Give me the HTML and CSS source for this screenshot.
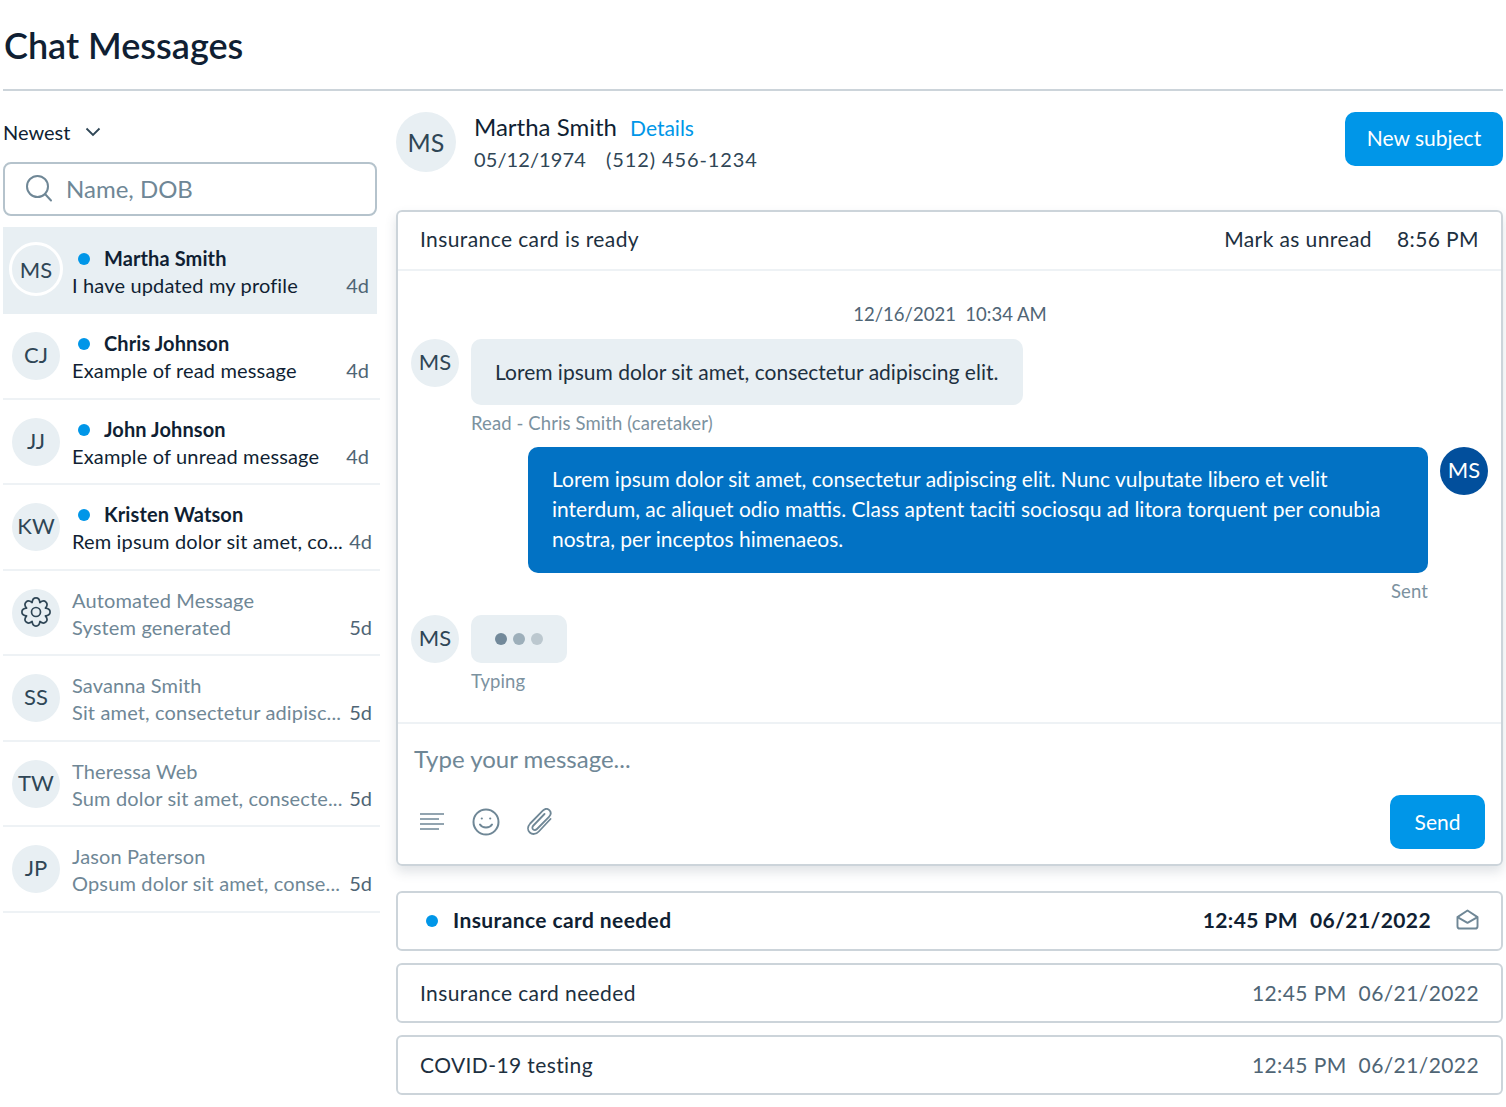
FILE: index.html
```html
<!DOCTYPE html>
<html lang="en">
<head>
    <meta charset="UTF-8">
    <title>Chat Messages</title>
    <link rel="stylesheet" href="styles.css">
</head>
<body>
    <div class="page">
        <header class="page-head">
            <h1>Chat Messages</h1>
        </header>
        <div class="columns">
            <aside class="sidebar">
                <div class="sort">
                    <span>Newest</span>
                    <svg width="16" height="10" viewBox="0 0 16 10" fill="none" stroke="#2f4656" stroke-width="1.8"><path d="M1.5 1.5 8 8l6.5-6.5"/></svg>
                </div>
                <div class="search">
                    <svg width="28" height="28" viewBox="0 0 28 28" fill="none" stroke="#6f8796" stroke-width="2"><circle cx="12.5" cy="12.5" r="10.5"/><path d="m20 20 6 6.5" stroke-linecap="round"/></svg>
                    <span>Name, DOB</span>
                </div>
                <ul class="threads">
                    <li class="thread selected">
                        <div class="avatar ringed">MS</div>
                        <div class="thread-text">
                            <div class="thread-name unread"><i class="dot"></i>Martha Smith</div>
                            <div class="thread-last"><span class="snippet">I have updated my profile</span><span class="age">4d</span></div>
                        </div>
                    </li>
                    <li class="thread">
                        <div class="avatar">CJ</div>
                        <div class="thread-text">
                            <div class="thread-name unread"><i class="dot"></i>Chris Johnson</div>
                            <div class="thread-last"><span class="snippet">Example of read message</span><span class="age">4d</span></div>
                        </div>
                    </li>
                    <li class="thread">
                        <div class="avatar">JJ</div>
                        <div class="thread-text">
                            <div class="thread-name unread"><i class="dot"></i>John Johnson</div>
                            <div class="thread-last"><span class="snippet">Example of unread message</span><span class="age">4d</span></div>
                        </div>
                    </li>
                    <li class="thread">
                        <div class="avatar">KW</div>
                        <div class="thread-text">
                            <div class="thread-name unread"><i class="dot"></i>Kristen Watson</div>
                            <div class="thread-last"><span class="snippet">Rem ipsum dolor sit amet, co...</span><span class="age far">4d</span></div>
                        </div>
                    </li>
                    <li class="thread read">
                        <div class="avatar icon-avatar">
                            <svg width="30" height="30" viewBox="0 0 30 30" fill="none" stroke="#2f4656" stroke-width="1.7" stroke-linejoin="round"><circle cx="15" cy="15" r="4.500"/><path d="M11.10 5.580C11.670-.65 18.330-.65 18.900 5.580C23.710 1.580 28.420 6.290 24.420 11.100C30.650 11.670 30.650 18.330 24.420 18.900C28.420 23.710 23.710 28.420 18.900 24.420C18.330 30.650 11.670 30.650 11.100 24.420C6.290 28.420 1.580 23.710 5.580 18.900C-.65 18.330-.65 11.670 5.580 11.100C1.580 6.290 6.290 1.580 11.100 5.580Z"/></svg>
                        </div>
                        <div class="thread-text">
                            <div class="thread-name">Automated Message</div>
                            <div class="thread-last"><span class="snippet">System generated</span><span class="age far">5d</span></div>
                        </div>
                    </li>
                    <li class="thread read">
                        <div class="avatar">SS</div>
                        <div class="thread-text">
                            <div class="thread-name">Savanna Smith</div>
                            <div class="thread-last"><span class="snippet">Sit amet, consectetur adipisc...</span><span class="age far">5d</span></div>
                        </div>
                    </li>
                    <li class="thread read">
                        <div class="avatar">TW</div>
                        <div class="thread-text">
                            <div class="thread-name">Theressa Web</div>
                            <div class="thread-last"><span class="snippet">Sum dolor sit amet, consecte...</span><span class="age far">5d</span></div>
                        </div>
                    </li>
                    <li class="thread read">
                        <div class="avatar">JP</div>
                        <div class="thread-text">
                            <div class="thread-name">Jason Paterson</div>
                            <div class="thread-last"><span class="snippet">Opsum dolor sit amet, conse...</span><span class="age far">5d</span></div>
                        </div>
                    </li>
                </ul>
            </aside>

            <main class="main">
                <div class="patient">
                    <div class="avatar big">MS</div>
                    <div class="patient-info">
                        <div class="patient-name">Martha Smith <a href="#" class="details">Details</a></div>
                        <div class="patient-meta"><span>05/12/1974</span><span class="phone">(512) 456-1234</span></div>
                    </div>
                    <button class="btn new-subject">New subject</button>
                </div>

                <section class="chat">
                    <div class="chat-head">
                        <span>Insurance card is ready</span>
                        <span class="chat-head-right"><span>Mark as unread</span><span>8:56 PM</span></span>
                    </div>
                    <div class="chat-body">
                        <div class="stamp">12/16/2021&nbsp; 10:34 AM</div>
                        <div class="msg">
                            <div class="avatar">MS</div>
                            <div class="bubble">Lorem ipsum dolor sit amet, consectetur adipiscing elit.</div>
                        </div>
                        <div class="note">Read - Chris Smith (caretaker)</div>
                        <div class="msg mine">
                            <div class="bubble">Lorem ipsum dolor sit amet, consectetur adipiscing elit. Nunc vulputate libero et velit interdum, ac aliquet odio mattis. Class aptent taciti sociosqu ad litora torquent per conubia nostra, per inceptos himenaeos.</div>
                            <div class="avatar">MS</div>
                        </div>
                        <div class="note sent">Sent</div>
                        <div class="msg typing-row">
                            <div class="avatar">MS</div>
                            <div class="bubble typing"><i></i><i></i><i></i></div>
                        </div>
                        <div class="note">Typing</div>
                    </div>
                    <div class="composer">
                        <div class="composer-input">Type your message...</div>
                        <div class="composer-tools">
                            <svg width="27" height="20" viewBox="0 0 27 20" fill="none" stroke="#6f8796" stroke-width="1.700"><path d="M1 2h24M1 7h19M1 12h24M1 17h19"/></svg>
                            <svg width="28" height="28" viewBox="0 0 28 28" fill="none" stroke="#6f8796" stroke-width="2"><circle cx="14" cy="14" r="12.500"/><path d="M8 16.500c2.500 4 9.500 4 12 0" stroke-linecap="round"/><circle cx="9.800" cy="10.500" r="1.100" fill="#6f8796" stroke="none"/><circle cx="18.200" cy="10.500" r="1.100" fill="#6f8796" stroke="none"/></svg>
                            <svg width="28" height="28" viewBox="0 0 28 28" fill="none" stroke="#6f8796" stroke-width="1.800" stroke-linecap="round" stroke-linejoin="round"><path d="M24.500 11 12.800 23.500c-2.800 3-6.600 3.200-9 1-2.500-2.300-2.300-6 .4-9L16.800 2.700c2-2 4.700-2.200 6.500-.5 1.800 1.800 1.700 4.500-.3 6.600L11 21c-1.200 1.200-2.800 1.400-3.900.4-1-1-1-2.600.3-3.900L18.500 6"/></svg>
                            <button class="btn send">Send</button>
                        </div>
                    </div>
                </section>

                <div class="subject unread-subject">
                    <span class="subject-title"><i class="dot"></i>Insurance card needed</span>
                    <span class="subject-time"><span>12:45 PM</span><span>06/21/2022</span>
                        <svg class="mail" width="23" height="21" viewBox="0 0 24 22" fill="none" stroke="#6f8796" stroke-width="2" stroke-linejoin="round"><path d="M1.500 8.500 12 1.500l10.500 7V18a2.500 2.500 0 0 1-2.500 2.500H4A2.500 2.500 0 0 1 1.500 18z"/><path d="m1.500 8.500 10.500 6 10.500-6"/></svg>
                    </span>
                </div>
                <div class="subject">
                    <span class="subject-title">Insurance card needed</span>
                    <span class="subject-time"><span>12:45 PM</span><span>06/21/2022</span></span>
                </div>
                <div class="subject">
                    <span class="subject-title">COVID-19 testing</span>
                    <span class="subject-time"><span>12:45 PM</span><span>06/21/2022</span></span>
                </div>
            </main>
        </div>
    </div>
</body>
</html>
```

FILE: styles.css
```css
* {
    box-sizing: border-box;
}
body {
    margin: 0;
    font-family: Lato, "Open Sans", sans-serif;
    color: #101f33;
    background: #fff;
}
.page {
    width: 1506px;
    height: 1107px;
    padding-left: 3px;
    padding-right: 3px;
    overflow: hidden;
}
.page-head {
    height: 91px;
    border-bottom: 2px solid #ccd4da;
    padding-top: 23px;
}
h1 {
    margin: 0 0 0 1px;
    font-size: 36px;
    line-height: 44px;
    font-weight: 600;
}
.columns {
    display: flex;
    gap: 16px;
}

/* left column */
.sidebar {
    width: 377px;
    flex: none;
}
.sort {
    display: flex;
    align-items: center;
    gap: 15px;
    height: 24px;
    margin-top: 29px;
    font-size: 20px;
}
.search {
    display: flex;
    align-items: center;
    gap: 13px;
    width: 374px;
    height: 54px;
    margin-top: 18px;
    padding-left: 20px;
    padding-bottom: 2px;
    border: 2px solid #b5c3cc;
    border-radius: 8px;
    font-size: 24px;
    color: #6f8796;
}
.threads {
    list-style: none;
    margin: 11px 0 0;
    padding: 0;
}
.thread {
    display: flex;
    height: 85.5px;
    padding: 18px 8px 0 9px;
    gap: 12px;
    border-bottom: 2px solid #eef2f5;
}
.thread.selected {
    width: 374px;
    height: 87px;
    background: #e8eff3;
    border-bottom: none;
    padding-left: 6px;
    padding-top: 15px;
    gap: 9px;
}
.avatar {
    width: 48px;
    height: 48px;
    flex: none;
    border-radius: 50%;
    background: #e8eff3;
    color: #2f4656;
    display: flex;
    align-items: center;
    justify-content: center;
    padding-bottom: 3px;
    font-size: 22px;
}
.avatar.icon-avatar {
    padding-bottom: 1px;
}
.avatar.ringed {
    width: 54px;
    height: 54px;
    border: 3px solid #fff;
    padding-bottom: 0;
}
.avatar.big {
    width: 60px;
    height: 60px;
    padding-bottom: 0;
    font-size: 25px;
}
.thread-text {
    flex: 1;
    min-width: 0;
    margin-top: -2px;
}
.selected .thread-text {
    margin-top: 3px;
}
.thread-name {
    height: 27px;
    font-size: 20px;
    line-height: 27px;
    letter-spacing: 0.12px;
}
.thread-name.unread {
    font-weight: 700;
    letter-spacing: 0.1px;
}
.dot {
    display: inline-block;
    width: 12px;
    height: 12px;
    border-radius: 50%;
    background: #0096e8;
    margin: 0 14px 3px 6px;
    vertical-align: middle;
}
.thread-last {
    display: flex;
    justify-content: space-between;
    font-size: 20px;
    line-height: 27px;
    white-space: nowrap;
}
.snippet {
    letter-spacing: 0.15px;
}
.age {
    color: #4f6575;
    padding-right: 3px;
}
.age.far {
    padding-right: 0;
}
.selected .age {
    padding-right: 0;
}
.read .thread-name,
.read .snippet {
    color: #6f8796;
}
.read .age {
    color: #4f6575;
}

/* right column */
.main {
    width: 1107px;
    flex: none;
}
.patient {
    display: flex;
    align-items: flex-start;
    height: 119px;
    padding-top: 21px;
}
.patient-info {
    flex: 1;
    margin-left: 18px;
    margin-top: -1px;
}
.patient-name {
    font-size: 24px;
    line-height: 32px;
}
.details {
    color: #0096e8;
    font-size: 21px;
    text-decoration: none;
    margin-left: 7px;
}
.patient-meta {
    display: flex;
    gap: 20px;
    font-size: 20px;
    line-height: 31px;
    color: #2f4656;
    letter-spacing: 0.1px;
}
.phone {
    letter-spacing: 0.9px;
}
.btn {
    border: none;
    border-radius: 10px;
    background: #0096e8;
    color: #fff;
    font-family: inherit;
    font-size: 21px;
    padding: 0 0 2px;
}
.new-subject {
    width: 158px;
    height: 54px;
    padding-bottom: 4px;
}
.chat {
    height: 656px;
    border: 2px solid #ccd4da;
    border-radius: 6px;
    box-shadow: 0 6px 12px rgba(60, 80, 100, 0.16);
    display: flex;
    flex-direction: column;
}
.chat-head {
    display: flex;
    justify-content: space-between;
    align-items: center;
    height: 59px;
    flex: none;
    padding: 0 22px 4px 22px;
    border-bottom: 2px solid #eef2f5;
    font-size: 21px;
    color: #1d3040;
    letter-spacing: 0.4px;
}
.chat-head-right {
    display: flex;
    gap: 25px;
}
.chat-body {
    flex: 1;
    padding: 31px 13px 0 13px;
}
.stamp {
    text-align: center;
    font-size: 18.500px;
    line-height: 24px;
    color: #4f6575;
    padding-left: 1px;
}
.msg {
    display: flex;
    gap: 12px;
    margin-top: 13px;
}
.bubble {
    background: #e8eff3;
    border-radius: 10px;
    padding: 18px 25px 18px 24px;
    font-size: 21px;
    line-height: 30px;
    color: #1d3040;
    height: 66px;
}
.note {
    margin: 6px 0 0 60px;
    font-size: 18.500px;
    line-height: 24px;
    letter-spacing: 0.1px;
    color: #7c929f;
}
.msg.mine {
    justify-content: flex-end;
    margin-top: 12px;
}
.msg.mine .bubble {
    width: 900px;
    height: 126px;
    background: #0272c4;
    color: #fff;
    padding: 17px 24px;
}
.msg.mine .avatar {
    background: #024f9c;
    color: #fff;
}
.note.sent {
    text-align: right;
    margin-right: 60px;
    margin-top: 6px;
}
.typing-row {
    margin-top: 12px;
}
.typing {
    width: 96px;
    height: 48px;
    padding: 0 24px;
    display: flex;
    align-items: center;
    gap: 6px;
}
.typing i {
    width: 12px;
    height: 12px;
    border-radius: 50%;
    background: #72899a;
}
.typing i:nth-child(2) {
    background: #9dafba;
}
.typing i:nth-child(3) {
    background: #bcc8cf;
}
.composer {
    height: 142px;
    flex: none;
    border-top: 2px solid #eef2f5;
    padding: 19px 16px 0 16px;
}
.composer-input {
    font-size: 24px;
    line-height: 32px;
    color: #6f8796;
}
.composer-tools {
    display: flex;
    align-items: center;
    gap: 26px;
    margin-top: 20px;
    padding-left: 5px;
}
.send {
    width: 95px;
    height: 54px;
    margin-left: auto;
}
.subject {
    display: flex;
    justify-content: space-between;
    align-items: center;
    height: 60px;
    margin-top: 12px;
    padding: 0 22px 2px;
    border: 2px solid #ccd4da;
    border-radius: 6px;
    font-size: 21px;
    color: #1d3040;
    letter-spacing: 0.4px;
}
.unread-subject {
    margin-top: 25px;
    padding-bottom: 3px;
    font-weight: 700;
    color: #101f33;
}
.unread-subject .subject-title .dot {
    margin: 0 15px 3px 6px;
}
.subject-time {
    display: flex;
    align-items: center;
    gap: 12px;
    color: #4f6575;
}
.unread-subject .subject-time {
    color: #101f33;
}
.mail {
    margin-left: 13px;
}
```
